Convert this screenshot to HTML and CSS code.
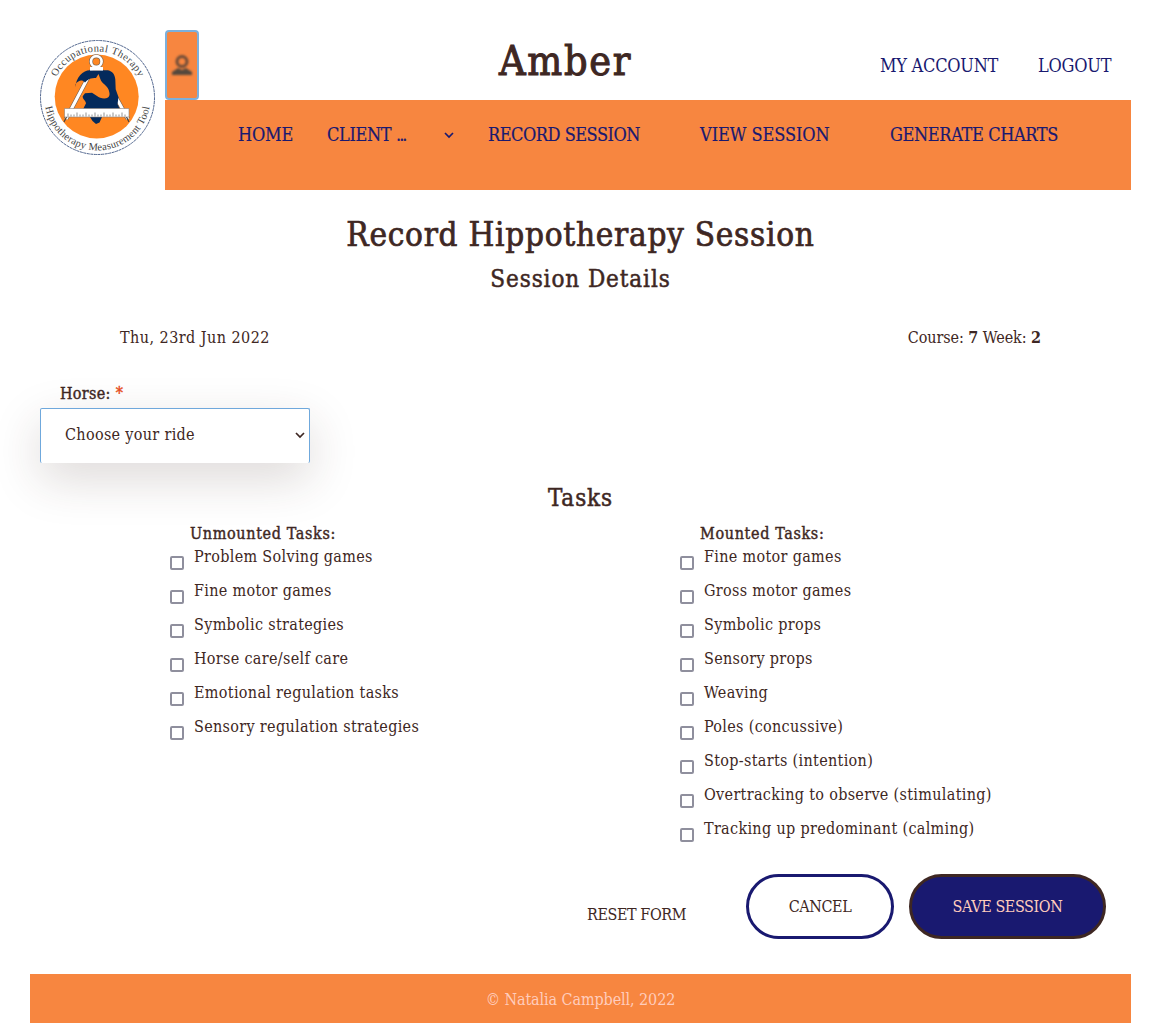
FILE: index.html
```html
<!DOCTYPE html>
<html lang="en">
<head>
<meta charset="utf-8">
<title>Record Hippotherapy Session</title>
<link rel="stylesheet" href="styles.css">
</head>
<body>
<header class="header">
  <a class="logo" href="#">
    <svg width="115" height="115" viewBox="0 0 115 115">
      <defs>
        <path id="arc-top" d="M11.5 57.5a46 46 0 0 1 92 0"/>
        <path id="arc-bottom" d="M4.500 57.5a53 53 0 0 0 106 0"/>
      </defs>
      <circle cx="57.5" cy="57.5" r="57" fill="#fff" stroke="#3c5480" stroke-width=".9" stroke-dasharray="3 .6"/>
      <circle cx="56.7" cy="56.5" r="42" fill="#ff8722"/>
      <path d="M52 30 26 79M61 30l27 49" stroke="#75604f" stroke-width="4.400" fill="none"/>
      <path d="M52 30 26 79M61 30l27 49" stroke="#fff" stroke-width="3.200" fill="none"/>
      <path d="m27 76-3 6M86 76l3 6" stroke="#444" stroke-width="1.200"/>
      <path d="M35.300 47C36 37 43 30 50 30h18c4.500 1 6.800 4 7.300 9l.4 10 2.800 8-1 7 2.500 5H43l3-6c-.5-3-3.500-4-3.300-7l2.300-3 7-.5 5 3.200c2.500 2.300 8 3.500 11 1.500 2.500-2 1.500-5 .5-8-1.500-4-7-6.500-8-10l-2-5.500-2.500 4c-7-.5-9.500 3-11 4.500-3-3-6-2.500-9.700 1.800z" transform="translate(0 .3)" fill="#042a5c"/>
      <path d="M50 77h12l-2.500 5.500-3.500 1.500-3.500-3z" fill="#042a5c"/>
      <circle cx="56.300" cy="21.500" r="5.300" fill="none" stroke="#75604f" stroke-width="3.900"/>
      <circle cx="56.300" cy="21.500" r="5.300" fill="none" stroke="#fff" stroke-width="2.700"/>
      <path d="M50 27h13v3.500H50z" fill="#fff"/>
      <path d="M24.500 68.500h64.500v8.500h-64.500z" fill="#fff" stroke="#8b8078" stroke-width=".6"/>
      <path d="M28 76.500v-3M31 76.500v-2M34 76.500v-2M37 76.500v-4M40 76.500v-2M43 76.500v-2M46 76.500v-4M49 76.500v-2M52 76.500v-2M55 76.500v-4M58 76.500v-2M61 76.500v-2M64 76.500v-4M67 76.500v-2M70 76.500v-2M73 76.500v-4M76 76.500v-2M79 76.500v-2M82 76.500v-4M85 76.500v-2" stroke="#666" stroke-width=".7"/>
      <text class="logo-text"><textPath href="#arc-top" startOffset="50%" text-anchor="middle" textLength="102">Occupational Therapy</textPath></text>
      <text class="logo-text"><textPath href="#arc-bottom" startOffset="50%" text-anchor="middle" textLength="147">Hippotherapy Measurement Tool</textPath></text>
    </svg>
  </a>
  <div class="header-main">
    <div class="topbar">
      <button class="avatar" aria-label="Profile">
        <svg width="22" height="24" viewBox="0 0 22 24"><circle cx="11" cy="8.500" r="5" fill="none" stroke="#6b4b38" stroke-width="3"/><path d="M1 22v-3l6-4 4 2 4-2 6 4v3z" fill="#54483d"/></svg>
      </button>
      <h1 class="client-name">Amber</h1>
      <div class="account"><a href="#">MY ACCOUNT</a><a href="#">LOGOUT</a></div>
    </div>
    <nav class="nav">
      <a class="nav-home" href="#">HOME</a>
      <a class="nav-client" href="#"><span class="nav-client-label">CLIENT <span class="dots">...</span></span><svg class="chevron" width="10" height="8" viewBox="0 0 10 8"><path d="m1 2 4 4 4-4"/></svg></a>
      <a class="nav-record" href="#">RECORD SESSION</a>
      <a class="nav-view" href="#">VIEW SESSION</a>
      <a class="nav-charts" href="#">GENERATE CHARTS</a>
    </nav>
  </div>
</header>
<main>
  <h2 class="title">Record Hippotherapy Session</h2>
  <h3 class="subtitle">Session Details</h3>
  <div class="meta"><span>Thu, 23rd Jun 2022</span><span class="course">Course: <b>7</b> Week: <b>2</b></span></div>
  <div class="horse">
    <label class="horse-label">Horse: <span class="required">*</span></label>
    <div class="select"><span>Choose your ride</span><svg class="chevron" width="10" height="8" viewBox="0 0 10 8"><path d="m1 2 4 4 4-4"/></svg></div>
  </div>
  <h3 class="subtitle tasks-title">Tasks</h3>
  <div class="tasks">
    <section class="task-group">
      <h4>Unmounted Tasks:</h4>
      <label><input type="checkbox"><span>Problem Solving games</span></label>
      <label><input type="checkbox"><span>Fine motor games</span></label>
      <label><input type="checkbox"><span>Symbolic strategies</span></label>
      <label><input type="checkbox"><span>Horse care/self care</span></label>
      <label><input type="checkbox"><span>Emotional regulation tasks</span></label>
      <label><input type="checkbox"><span>Sensory regulation strategies</span></label>
    </section>
    <section class="task-group">
      <h4>Mounted Tasks:</h4>
      <label><input type="checkbox"><span>Fine motor games</span></label>
      <label><input type="checkbox"><span>Gross motor games</span></label>
      <label><input type="checkbox"><span>Symbolic props</span></label>
      <label><input type="checkbox"><span>Sensory props</span></label>
      <label><input type="checkbox"><span>Weaving</span></label>
      <label><input type="checkbox"><span>Poles (concussive)</span></label>
      <label><input type="checkbox"><span>Stop-starts (intention)</span></label>
      <label><input type="checkbox"><span>Overtracking to observe (stimulating)</span></label>
      <label><input type="checkbox"><span>Tracking up predominant (calming)</span></label>
    </section>
  </div>
  <div class="actions">
    <button class="reset">RESET FORM</button>
    <button class="btn cancel">CANCEL</button>
    <button class="btn save">SAVE SESSION</button>
  </div>
</main>
<footer class="footer">© Natalia Campbell, 2022</footer>
</body>
</html>
```
FILE: styles.css
```css
* { box-sizing: border-box; }
body {
  margin: 0;
  padding: 30px 30px 0;
  background: #fff;
  color: #3e2723;
  font-family: "DejaVu Serif Condensed", "DejaVu Serif", serif;
  font-stretch: condensed;
  font-size: 16px;
  line-height: 24px;
  letter-spacing: .32px;
}
h1, h2, h3, h4 { margin: 0; font-weight: 400; }
a { color: #191970; text-decoration: none; }
button { font: inherit; letter-spacing: inherit; color: inherit; background: none; border: 0; padding: 0; }
.header { display: flex; height: 160px; }
.logo { width: 135px; padding: 10px; }
.logo svg { display: block; }
.logo-text { font-family: "Liberation Serif", serif; font-size: 10.5px; letter-spacing: 0; fill: #444; }
.header-main { flex: 1; }
.topbar { display: grid; grid-template: 70px / 34px 1fr 251px; }
.avatar { display: flex; align-items: center; justify-content: center; background: #f78640; border: 2px solid #7cb0dc; border-radius: 4px; }
.avatar svg { filter: blur(.8px); }
.client-name { padding-left: 300px; font-size: 41px; line-height: 62px; letter-spacing: 1.7px; -webkit-text-stroke: 1px; }
.account { display: flex; gap: 40px; font-size: 18px; line-height: 72px; letter-spacing: -.27px; white-space: nowrap; }
.nav { display: flex; height: 90px; padding-left: 73px; background: #f78640; font-size: 18px; line-height: 70px; letter-spacing: -.2px; white-space: nowrap; -webkit-text-stroke: .2px; }
.nav-home { width: 89px; }
.nav-client { display: flex; width: 161px; letter-spacing: -.35px; }
.nav-client-label { width: 117px; }
.dots { letter-spacing: -2px; }
.nav-client .chevron { margin-top: 31px; }
.nav-record { width: 212px; letter-spacing: -.48px; }
.nav-view { width: 190px; letter-spacing: -.06px; }
.nav-charts { letter-spacing: -.36px; }
.chevron { fill: none; stroke: currentColor; stroke-width: 1.7; }
.title { margin-top: 20px; text-align: center; font-size: 33px; line-height: 50px; letter-spacing: .72px; -webkit-text-stroke: .7px; }
.subtitle { text-align: center; font-size: 24px; line-height: 38px; letter-spacing: .9px; -webkit-text-stroke: .5px; }
.meta { display: flex; justify-content: space-between; margin-top: 28px; padding: 0 90px; letter-spacing: .45px; }
.course { letter-spacing: -.07px; }
.horse { width: 290px; margin-top: 32px; padding-left: 10px; }
.horse-label { display: block; height: 26px; padding-left: 20px; -webkit-text-stroke: .4px; }
.required { color: #e64a19; }
.select { display: flex; justify-content: space-between; width: 270px; height: 55px; padding: 0 4px 0 24px; border: 1px solid #6fa8dc; border-bottom: 0; border-radius: 2px; background: #fff; box-shadow: 0 16px 48px rgba(62, 39, 35, .175); line-height: 51px; }
.select .chevron { margin-top: 22px; }
.tasks-title { margin-top: 16px; }
.tasks { display: grid; grid-template-columns: 510px 1fr; margin-top: 5px; padding-left: 140px; height: 352px; align-items: start; }
.task-group h4 { height: 23px; padding-left: 20px; font-size: 16px; letter-spacing: .65px; -webkit-text-stroke: .4px; }
.task-group label { display: flex; height: 34px; }
.task-group input { appearance: none; width: 14px; height: 14px; margin: 10.5px 10px 0 0; border: 2px solid #8f8f9d; border-radius: 2px; }
.actions { display: flex; height: 100px; padding-left: 557px; font-size: 16px; letter-spacing: -.42px; white-space: nowrap; }
.reset { width: 159px; height: 24px; margin-top: 29px; text-align: left; }
.btn { height: 65px; border: 3px solid #191970; border-radius: 33px; text-align: center; }
.cancel { width: 148px; margin-right: 15px; }
.save { width: 197px; background: #191970; border-color: #3e2723; color: #ffccbc; }
.footer { height: 49px; background: #f78640; color: #ffccbc; text-align: center; font-size: 16px; line-height: 51px; letter-spacing: -.1px; }
```
